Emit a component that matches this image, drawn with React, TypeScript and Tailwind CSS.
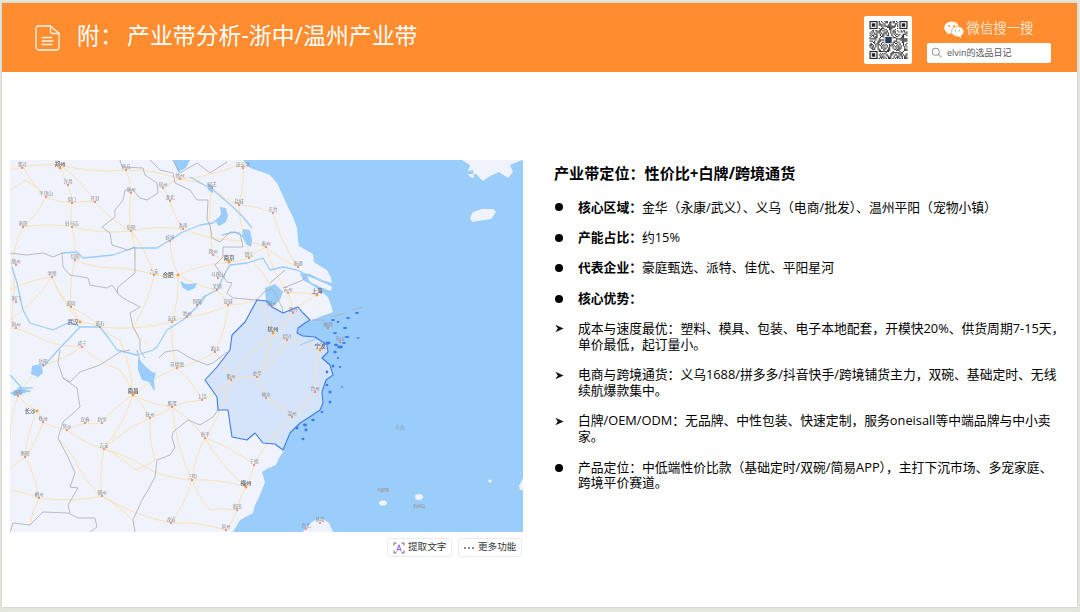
import { Fragment } from "react";

const cjk = { fontFamily: '"Open Sans", "Noto Sans CJK SC", sans-serif' };

const items = [
  { mark: "dot", bold: "核心区域：", lines: ["金华（永康/武义）、义乌（电商/批发）、温州平阳（宠物小镇）"] },
  { mark: "dot", bold: "产能占比：", lines: ["约15%"] },
  { mark: "dot", bold: "代表企业：", lines: ["豪庭甄选、派特、佳优、平阳星河"] },
  { mark: "dot", bold: "核心优势：", lines: [""] },
  { mark: "arrow", bold: "", lines: ["成本与速度最优：塑料、模具、包装、电子本地配套，开模快20%、供货周期7-15天，", "单价最低，起订量小。"] },
  { mark: "arrow", bold: "", lines: ["电商与跨境通货：义乌1688/拼多多/抖音快手/跨境铺货主力，双碗、基础定时、无线", "续航爆款集中。"] },
  { mark: "arrow", bold: "", lines: ["白牌/OEM/ODM：无品牌、中性包装、快速定制，服务oneisall等中端品牌与中小卖", "家。"] },
  { mark: "dot", bold: "", lines: ["产品定位：中低端性价比款（基础定时/双碗/简易APP），主打下沉市场、多宠家庭、", "跨境平价赛道。"] },
];

// city: name, x, y (page coordinates, the map viewBox uses them directly)
const cities: [string, number, number][] = [
  ["漯河", 22, 168], ["商丘", 126, 170], ["徐州", 180, 179], ["连云港", 243, 168], ["许昌", 68, 185],
  ["宿州", 163, 188], ["平顶山", 46, 197], ["宿迁", 212, 188], ["亳州", 131, 193], ["周口", 72, 203],
  ["开封", 95, 202], ["淮北", 170, 201], ["盐城", 239, 205], ["南阳", 23, 227], ["驻马店", 72, 227],
  ["阜阳", 131, 231], ["淮南", 183, 229], ["蚌埠", 170, 241], ["泰州", 266, 247], ["信阳", 75, 260],
  ["滁州", 213, 255], ["镇江", 249, 258], ["随州", 16, 265], ["六安", 154, 275], ["孝感", 52, 277],
  ["马鞍山", 218, 278], ["芜湖", 217, 290], ["荆门", 16, 302], ["黄冈", 71, 307], ["铜陵", 197, 305],
  ["宣城", 228, 305], ["黄石", 100, 327], ["池州", 187, 317], ["安庆", 172, 322], ["荆州", 16, 328],
  ["咸宁", 82, 347], ["东台", 273, 213], ["南通", 298, 267], ["苏州", 288, 293], ["湖州", 272, 307],
  ["嘉兴", 293, 313], ["嵊泗", 328, 328], ["绍兴", 287, 340], ["舟山", 340, 342], ["台州", 315, 392],
  ["温州", 292, 417], ["岳阳", 43, 365], ["黄山", 215, 352], ["景德镇", 177, 368], ["益阳", 18, 396],
  ["上饶", 202, 400], ["鹰潭", 172, 407], ["抚州", 150, 418], ["宜春", 85, 423], ["新余", 102, 423],
  ["株洲", 43, 422], ["萍乡", 67, 430], ["衢州", 231, 380], ["金华", 257, 377], ["丽水", 266, 398],
  ["南平", 205, 438], ["吉安", 104, 449], ["衡阳", 25, 457], ["宁德", 254, 465], ["三明", 192, 480],
  ["郴州", 39, 498], ["赣州", 102, 496], ["莆田", 237, 510], ["龙岩", 171, 523], ["泉州", 226, 530],
  ["基隆", 320, 523], ["台北", 306, 529],
];

const bigCities: [string, number, number, number][] = [
  ["郑州", 60, 168, 0], ["南京", 229, 262, 0], ["合肥", 178, 275, -10], ["武汉", 80, 322, -7],
  ["上海", 317, 295, 0], ["杭州", 273, 333, 0], ["宁波", 320, 350, 0], ["南昌", 133, 395, 0],
  ["长沙", 37, 411, -7], ["福州", 246, 487, 0],
];

const land = "10,160 243,160 250,168 262,172 270,175 277,183 283,196 287,205 293,217 297,228 298,240 299,246 306,250 313,254 314,262 320,266 327,270 331,278 332,283 322,280 310,274 300,273 303,280 312,285 322,292 328,297 331,305 333,312 322,316 312,320 305,323 298,328 297,333 303,336 315,337 327,345 328,352 322,358 330,365 333,375 326,380 322,392 323,403 320,410 308,418 300,423 290,433 285,445 283,452 279,458 276,465 270,467 262,472 265,482 260,495 255,505 253,513 240,520 233,532 10,532";

const zhejiang = "257,300 267,301 272,307 283,313 298,307 303,313 310,320 305,323 298,328 297,333 303,336 315,337 327,345 328,352 322,358 330,365 333,375 326,380 322,392 323,403 320,410 308,418 300,423 290,433 285,445 283,450 275,444 263,443 255,433 247,440 232,437 228,410 218,410 217,397 205,380 217,367 230,350 232,335 245,322";

const borders = [
  "120,160 122,167 143,168 145,175 157,183 158,193 147,200 140,198 133,190 125,190 123,200 115,210 115,217 102,227 110,233 112,245 128,250 135,247 135,273 118,287 117,293 123,298 140,307 130,313 133,327 140,340 140,350 145,358",
  "10,253 27,255 43,253 53,257 62,253 63,267 70,275 88,278 90,285 107,288 112,285 118,293",
  "150,160 160,170 173,173 175,183 190,190 197,200 208,200 207,220 210,225 212,238 220,242 230,232 240,233 243,247 223,247 223,257 215,265 220,272 227,282 232,283 227,293 233,298 257,300",
  "173,160 180,173 197,163 210,173 227,162",
  "60,350 58,363 63,378 77,388 80,407 63,422 58,438 68,457 75,473 70,487 78,488 68,505 70,513",
  "63,378 70,382 80,372 100,365 120,352 130,350",
  "177,350 190,358 207,365 213,363 227,352",
  "159,358 165,352 177,350",
  "218,410 213,417 200,425 188,420 173,432 172,438 175,447 170,455 157,460 155,477 148,490 142,500 133,520 135,532",
  "10,532 13,523 30,525 35,520 43,512 68,513 78,518 95,518 97,527 90,532",
  "257,300 264,292 272,289 282,307 283,313",
  "283,288 303,280 307,275",
  "270,283 285,270",
];

const rivers = [
  "12,267 17,283 23,310 30,323 53,330 70,322 80,327",
  "43,367 58,350 80,327 100,327 110,340 117,350 137,355 153,350 157,347 167,330 183,320 197,307 203,297 217,290 223,277 230,265 247,263 263,258 270,270 283,267 297,270 307,275 323,282 332,285",
  "62,253 77,252 83,258 113,255 133,248 157,248 170,240 183,232 200,225 213,223 220,217",
  "190,177 213,190 233,207 243,217 252,228",
  "30,392 18,388 33,388",
  "137,350 140,362",
  "10,375 22,388",
  "222,235 235,232 245,238",
  "200,305 206,295",
  "300,345 318,338",
];

const lakes = [
  "173,160 190,160 186,168 178,172",
  "207,183 213,186 213,193 208,190",
  "220,207 226,208 228,216 226,222 219,226 216,222 221,214",
  "243,229 250,230 252,240 251,247 246,244 242,236",
  "180,281 186,284 191,284 197,283 195,288 188,291 183,288",
  "138,358 145,366 152,372 156,373 154,380 155,392 149,382 142,380 138,370",
  "32,366 41,364 43,373 38,377 31,374",
  "265,288 275,284 283,292 280,300 272,307 266,304",
  "10,393 20,388 32,391 24,393 15,396",
];

// road network, drawn as gently bent lines between points
const roads = [
  "10,170 60,165 126,170 180,179 243,163",
  "60,165 68,185 72,203 72,227 75,260 71,307 80,322",
  "60,165 95,202 131,231 154,275 178,275",
  "22,165 46,197 23,227 12,265 13,302 13,328",
  "126,170 131,193 131,231 135,260",
  "180,179 163,188 170,201 183,229 170,241 178,275",
  "180,179 212,188 239,205 273,213 298,267",
  "212,188 213,255 229,262",
  "243,163 239,205 246,240 249,258",
  "95,202 72,203 46,197 25,180 10,190",
  "23,227 72,227 131,231 183,229 230,240 266,247",
  "75,260 110,268 154,275 178,275 229,262 249,258 266,247 298,267",
  "10,290 52,277 80,322 100,327 172,322 187,317 197,305 217,290 229,262",
  "178,275 217,290 228,305 257,300 273,333",
  "178,275 172,322 177,368 202,400",
  "52,277 71,307 100,327 120,340 133,395",
  "13,328 43,340 82,347 43,365 18,396",
  "82,347 120,370 133,395 172,407 202,400 231,380 257,377 287,340 320,350",
  "288,293 317,295 293,313 273,333 287,340",
  "266,247 288,293 293,313",
  "249,258 270,285 288,293",
  "273,333 231,380 205,438 192,480 171,523",
  "273,333 257,377 266,398 292,417",
  "320,350 315,392 292,417 254,465 246,487 237,510 226,530",
  "133,395 150,418 172,407 205,438 246,487",
  "133,395 102,423 85,423 67,430 43,422 37,411 18,396",
  "133,395 104,449 102,496 135,523",
  "37,411 25,457 39,498 30,525",
  "43,422 25,457 10,470",
  "67,430 104,449 150,418",
  "104,449 150,470 192,480 246,487",
  "102,496 171,523 226,530",
  "102,496 39,498 10,490",
  "150,418 155,460 135,470 104,449",
  "215,352 177,368 133,395",
  "215,352 228,305 187,317",
  "215,352 231,380",
  "18,396 10,440",
  "60,440 80,470 102,496",
  "192,480 210,510 237,510",
  "205,438 254,465",
  "172,407 192,480",
  "148,345 133,327 154,275",
  "10,320 52,277",
];

function bent(points: string, seed: number) {
  const pts = points.split(" ").map((p) => p.split(",").map(Number));
  let d = `M${pts[0][0]} ${pts[0][1]}`;
  for (let i = 1; i < pts.length; i++) {
    const [ax, ay] = pts[i - 1];
    const [bx, by] = pts[i];
    const s = ((seed + i) % 2 === 0 ? 1 : -1) * 0.09;
    const cx = (ax + bx) / 2 - (by - ay) * s;
    const cy = (ay + by) / 2 + (bx - ax) * s;
    d += ` Q${cx.toFixed(1)} ${cy.toFixed(1)} ${bx} ${by}`;
  }
  return d;
}

// small blue islands off the Zhejiang coast: x, y, rx, ry
const islets = [
  [333, 320, 2, 0.9], [338, 322, 1.4, 0.9], [348, 318, 2, 1], [357, 313, 2, 0.9], [345, 328, 2.2, 1],
  [335, 333, 2, 1], [347, 337, 2.5, 1], [358, 338, 1.6, 0.8], [328, 343, 2.6, 1.4], [340, 347, 3, 1.4],
  [336, 345, 2, 1.2], [344, 343, 2, 1], [340, 367, 1.3, 1], [342, 387, 1, 0.8], [330, 392, 1.6, 1.6],
  [330, 402, 1.4, 1.6], [305, 425, 2, 1.4], [303, 439, 1.4, 1.2], [335, 352, 1.8, 1.2], [338, 358, 1.2, 1],
  [327, 372, 1.4, 1.4], [322, 412, 1.6, 1], [313, 420, 1.8, 1.2], [306, 430, 1.6, 1.4], [333, 366, 1.4, 1.6],
  [327, 385, 1.4, 1.2], [297, 428, 1.6, 1.4],
];

function MapPicture() {
  return (
    <svg viewBox="10 160 513 372" className="block w-[513px] h-[372px] blur-[0.35px]">
      <rect x="10" y="160" width="513" height="372" fill="#9BCDFA" />
      <polygon points={land} fill="#F0F3FB" />
      <polygon points={zhejiang} fill="#D6E4FB" />
      {/* islands */}
      <polygon points="307,276 318,279 332,287 331,291 320,287 310,282" fill="#F0F3FB" />
      <polygon points="470,218 473,212 482,209 493,209 496,212 491,219 478,221 472,222" fill="#F0F3FB" />
      <polygon points="462,160 470,165 468,171 473,170 474,178 470,177 468,174 476,174 483,181 490,176 499,172 508,178 513,172 510,165 522,160" fill="#F0F3FB" />
      <polygon points="303,532 307,526 315,520 322,518 329,523 333,532" fill="#F0F3FB" />
      <ellipse cx="419" cy="497" rx="4" ry="3" fill="#F0F3FB" />
      <ellipse cx="383" cy="503" rx="4" ry="2.6" fill="#F0F3FB" />
      <circle cx="490" cy="481" r="1.6" fill="#F0F3FB" />
      <polygon points="519,486 523,478 523,490 520,490" fill="#F0F3FB" />
      <circle cx="271" cy="466" r="1.5" fill="#F0F3FB" />

      {roads.map((r, i) => (
        <path key={i} d={bent(r, i)} fill="none" stroke="#FAE3B6" strokeWidth="1" />
      ))}
      {lakes.map((l, i) => (
        <polygon key={i} points={l} fill="#9BCDFA" />
      ))}
      {rivers.map((r, i) => (
        <polyline key={i} points={r} fill="none" stroke="#9BCDFA" strokeWidth="1.3" strokeLinejoin="round" />
      ))}
      {borders.map((b, i) => (
        <polyline key={i} points={b} fill="none" stroke="#A9ACB3" strokeWidth="0.8" strokeLinejoin="round" />
      ))}
      <polyline points="312,320 325,320" fill="none" stroke="#A9ACB3" strokeWidth="0.8" />
      <polyline points="332,317 345,313" fill="none" stroke="#A9ACB3" strokeWidth="0.8" />
      <polyline points="352,310 363,307" fill="none" stroke="#A9ACB3" strokeWidth="0.8" />

      <polygon points={zhejiang} fill="none" stroke="#3D7BEA" strokeWidth="1.1" strokeLinejoin="round" />
      {islets.map(([x, y, rx, ry], i) => (
        <ellipse key={i} cx={x} cy={y} rx={rx} ry={ry} fill="#3D7BEA" />
      ))}

      {cities.map(([name, x, y], i) => (
        <Fragment key={i}>
          <text x={x} y={y - 2} fontSize="4.6" fill="#8A8D93" textAnchor="middle">{name}</text>
          <circle cx={x} cy={y} r="0.9" fill="#F0695C" />
        </Fragment>
      ))}
      {bigCities.map(([name, x, y, dx], i) => (
        <Fragment key={i}>
          <text x={x + dx} y={dx ? y + 2 : y - 2.5} fontSize="5.6" fontWeight="500" fill="#5F6269" textAnchor="middle">{name}</text>
          <circle cx={x} cy={y} r="1.4" fill="#F59A3C" />
        </Fragment>
      ))}
      <text x="400" y="429" fontSize="4.5" fill="#8D98A6" textAnchor="middle">东海</text>
      <text x="383" y="492" fontSize="4" fill="#A08A70" textAnchor="middle">与那国</text>
      <text x="419" y="508" fontSize="4" fill="#A08A70" textAnchor="middle">石垣岛</text>
    </svg>
  );
}

// deterministic fake QR modules
function QrCode() {
  const n = 33;
  const cells: [number, number][] = [];
  for (let y = 0; y < n; y++) {
    for (let x = 0; x < n; x++) {
      const inFinder = (x < 8 && y < 8) || (x >= n - 8 && y < 8) || (x < 8 && y >= n - 8);
      if (inFinder) continue;
      if ((x * 7 + y * 13 + ((x * y * 5) % 11)) % 5 < 2 || (x ^ y) % 7 === 0) cells.push([x, y]);
    }
  }
  const finder = (x: number, y: number) => (
    <g key={`${x}-${y}`}>
      <rect x={x + 0.5} y={y + 0.5} width="6" height="6" fill="none" stroke="#222" />
      <rect x={x + 2} y={y + 2} width="3" height="3" fill="#222" />
    </g>
  );
  return (
    <svg viewBox="0 0 33 33" className="w-[39px] h-[38px] blur-[0.3px]">
      {cells.map(([x, y]) => (
        <rect key={`${x}-${y}`} x={x} y={y} width="1" height="1" fill="#2a2a2a" />
      ))}
      {finder(0, 0)}
      {finder(26, 0)}
      {finder(0, 26)}
      <rect x="13" y="13" width="7" height="7" fill="#fff" />
      <rect x="13.7" y="13.7" width="5.6" height="5.6" fill="#2B3A55" />
    </svg>
  );
}

function WechatIcon() {
  return (
    <svg viewBox="0 0 20 17" className="w-[20px] h-[17px]">
      <ellipse cx="7.6" cy="6.6" rx="7.4" ry="6.2" fill="#fff" />
      <path d="M3.4 10.5 L2.8 13.6 L6.4 11.6 Z" fill="#fff" />
      <circle cx="5.2" cy="5" r="0.9" fill="#FF8C2F" />
      <circle cx="9.8" cy="5" r="0.9" fill="#FF8C2F" />
      <ellipse cx="13.6" cy="10.6" rx="6.2" ry="5.1" fill="#fff" stroke="#FF8C2F" strokeWidth="0.7" />
      <path d="M16.6 14.2 L17.4 16.8 L14 15.2 Z" fill="#fff" />
      <circle cx="11.6" cy="9.6" r="0.8" fill="#7BC67B" />
      <circle cx="15.6" cy="9.6" r="0.8" fill="#7BC67B" />
    </svg>
  );
}

export default function App() {
  return (
    <div className="w-[1080px] h-[612px] overflow-hidden bg-[#E4E7DD] pt-[3px] pl-[2px] pr-[3px] pb-[5px]" style={cjk}>
      <div className="w-full h-full bg-white flex flex-col shadow-[0_0_2px_#bdbfb6]">
        <header className="h-[69px] bg-[#FF8C2F] flex items-center text-white shrink-0">
          <svg viewBox="0 0 25 26" fill="none" stroke="#fff" strokeWidth="1.3" strokeLinejoin="round" strokeLinecap="round" className="ml-[33px] w-[25px] h-[26px] opacity-90">
            <path d="M3.5 1 H15.5 L24 8.5 V22 a3 3 0 0 1 -3 3 H4 a3 3 0 0 1 -3 -3 V3.5 A2.5 2.5 0 0 1 3.5 1 Z" />
            <path d="M15.5 1 V6.5 a2 2 0 0 0 2 2 H24" />
            <path d="M7 12.5 H17 M7 16 H18 M7 19.5 H17" />
          </svg>
          <h1 className="ml-[17px] -mt-[2px] text-[22.9px] leading-none font-normal whitespace-nowrap">
            <span className="inline-block w-[50px]">附：</span>产业带分析-浙中/温州产业带
          </h1>
          <div className="ml-auto mr-[26px] mt-[4px] flex items-center gap-[15px]">
            <div className="w-[48px] h-[48px] bg-white rounded-[2px] flex items-center justify-center">
              <QrCode />
            </div>
            <div className="w-[124px] flex flex-col items-center gap-[5px] pt-[4px]">
              <div className="h-[17px] flex items-center gap-[3px] text-[13.4px] leading-none text-[#FFE6CF] -ml-[1px]">
                <WechatIcon />
                <span className="whitespace-nowrap">微信搜一搜</span>
              </div>
              <div className="w-[124px] h-[20px] bg-white rounded-[2px] flex items-center pl-[4px] gap-[5px] text-[9px] text-[#555]">
                <svg viewBox="0 0 12 12" fill="none" stroke="#999" strokeWidth="1.1" strokeLinecap="round" className="w-[11px] h-[11px]">
                  <circle cx="5.2" cy="5.2" r="3.8" />
                  <path d="M8 8 L10.8 10.8" />
                </svg>
                elvin的选品日记
              </div>
            </div>
          </div>
        </header>

        <main className="flex pl-[8px] pt-[88px]">
          <section className="w-[513px] shrink-0">
            <MapPicture />
            <div className="flex justify-end gap-[6px] mt-[6px] pr-[1px]">
              <div className="w-[65px] h-[19px] border border-[#EBEBEB] rounded-[3px] flex items-center pl-[5px] gap-[3px] text-[9.6px] text-[#333] whitespace-nowrap">
                <svg viewBox="0 0 12 12" fill="none" className="w-[12px] h-[12px]">
                  <path d="M1 3.5 V1 H3.5 M8.5 1 H11 V3.5 M1 8.5 V11 H3.5 M8.5 11 H11 V8.5" stroke="#555" strokeWidth="0.9" />
                  <path d="M3.7 9.5 L6 2.8 L8.3 9.5 M4.5 7.4 H7.5" stroke="#8B5CF6" strokeWidth="1" />
                </svg>
                提取文字
              </div>
              <div className="w-[64px] h-[19px] border border-[#EBEBEB] rounded-[3px] flex items-center pl-[5px] gap-[4px] text-[9.6px] text-[#333] whitespace-nowrap">
                <span className="flex gap-[2px]">
                  <span className="w-[2px] h-[2px] rounded-full bg-[#666]" />
                  <span className="w-[2px] h-[2px] rounded-full bg-[#666]" />
                  <span className="w-[2px] h-[2px] rounded-full bg-[#666]" />
                </span>
                更多功能
              </div>
            </div>
          </section>

          <section className="ml-[31px] text-black">
            <h2 className="h-[26px] mb-[13.5px] flex items-center text-[15.1px] font-bold whitespace-nowrap">
              产业带定位：性价比+白牌/跨境通货
            </h2>
            <ul className="flex flex-col gap-[14.6px] text-[12.8px] leading-[15.8px]">
              {items.map((item, i) => (
                <li key={i} className="flex">
                  <span className="w-[24px] h-[15.8px] shrink-0 flex items-center pl-[1px]">
                    {item.mark === "dot" ? (
                      <span className="w-[8px] h-[8px] rounded-full bg-black" />
                    ) : (
                      <svg viewBox="0 0 9 8" className="w-[9px] h-[9px]">
                        <path d="M0.3 0.3 L8.6 4 L0.3 7.7 L2.8 4 Z" fill="#111" />
                      </svg>
                    )}
                  </span>
                  <p className="whitespace-nowrap">
                    {item.bold && <b className="font-bold">{item.bold}</b>}
                    {item.lines.map((line, j) => (
                      <Fragment key={j}>
                        {j > 0 && <br />}
                        {line}
                      </Fragment>
                    ))}
                  </p>
                </li>
              ))}
            </ul>
          </section>
        </main>
      </div>
    </div>
  );
}
